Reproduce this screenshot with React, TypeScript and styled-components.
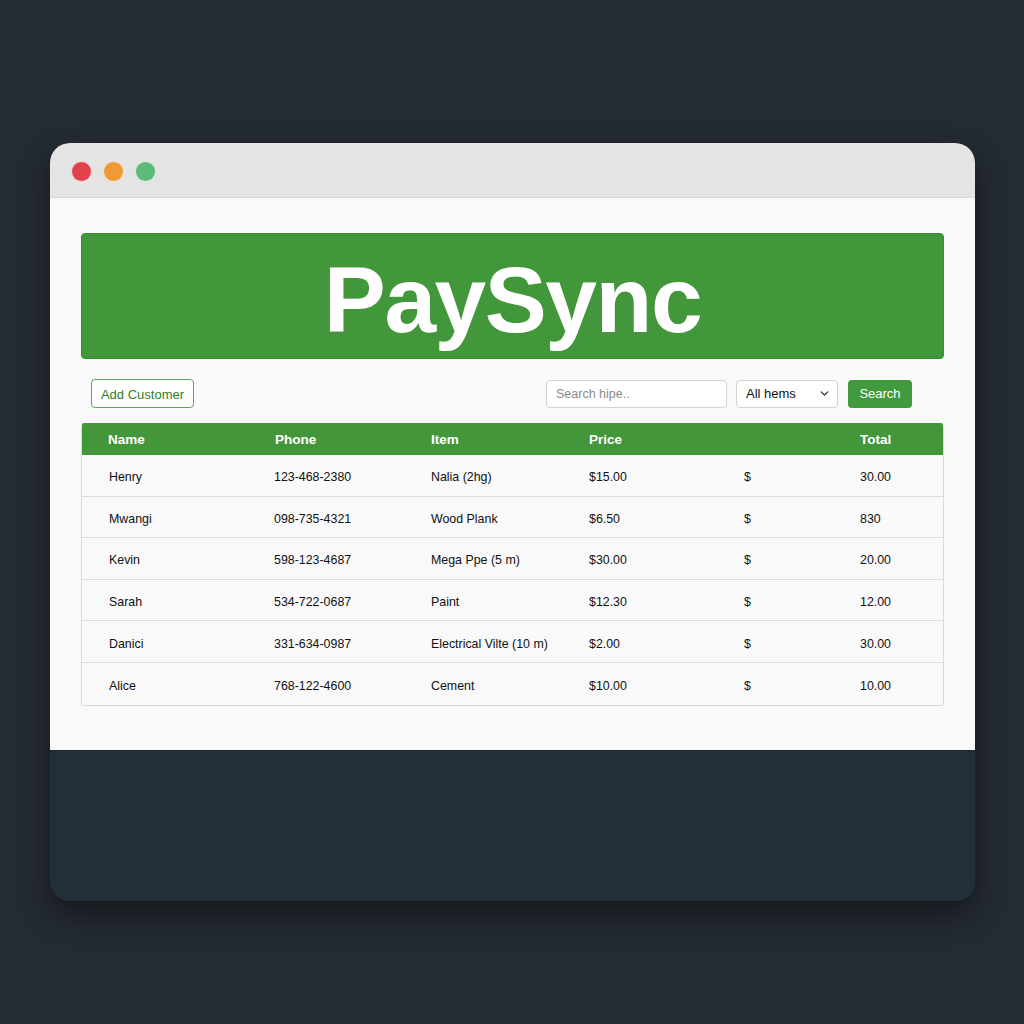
import React from "react";
import styled, { createGlobalStyle } from "styled-components";
import { ChevronDown } from "lucide-react";

const GlobalStyle = createGlobalStyle`
  html, body { margin: 0; padding: 0; }
  body {
    background: #252b33;
    font-family: "Liberation Sans", Arial, sans-serif;
    width: 1024px;
    height: 1024px;
    overflow: hidden;
  }
`;

const Page = styled.div`
  padding: 143px 0 0 50px;
`;

const Window = styled.div`
  width: 925px;
  border-radius: 20px;
  overflow: hidden;
  background: #232f38;
  box-shadow: 0 14px 30px rgba(0, 0, 0, 0.45);
  display: flex;
  flex-direction: column;
`;

const TitleBar = styled.div`
  height: 55px;
  background: #e4e4e4;
  display: flex;
  align-items: center;
  gap: 13px;
  padding: 2px 0 0 22px;
  border-bottom: 1px solid #d9d9d9;
  box-sizing: border-box;
`;

const Dot = styled.span<{ $color: string; $ring: string }>`
  width: 19px;
  height: 19px;
  border-radius: 50%;
  background: ${(p) => p.$color};
  box-shadow: 0 0 0 1px ${(p) => p.$ring};
`;

const Content = styled.div`
  background: #f9f9f9;
  padding: 35px 31px 44px 31px;
  display: flex;
  flex-direction: column;
  border-bottom: 1px solid #1b242b;
`;

const Footer = styled.div`
  height: 150px;
  background: #232f38;
`;

const Banner = styled.div`
  height: 126px;
  background: #43973b;
  border: 1px solid #3b8b34;
  border-radius: 4px;
  box-sizing: border-box;
  display: flex;
  align-items: center;
  justify-content: center;
`;

const Title = styled.h1`
  margin: 0;
  color: #ffffff;
  font-family: "Liberation Sans", Arial, sans-serif;
  font-weight: 700;
  font-size: 93px;
  letter-spacing: -1.5px;
  line-height: 1;
  transform: translate(0px, 4px);
`;

const Toolbar = styled.div`
  display: flex;
  align-items: center;
  margin: 20px 0 15px 0;
  padding: 0 32px 0 10px;
  height: 29px;
`;

const OutlineButton = styled.button`
  height: 29px;
  width: 103px;
  border: 1px solid #5aa653;
  border-radius: 4px;
  background: #ffffff;
  color: #2f7f2a;
  font-family: "Liberation Sans", Arial, sans-serif;
  font-size: 13px;
  padding: 1px 0 0 0;
  cursor: pointer;
`;

const Spacer = styled.div`
  flex: 1;
`;

const SearchInput = styled.input`
  width: 181px;
  height: 28px;
  box-sizing: border-box;
  border: 1px solid #d3d3d3;
  border-radius: 4px;
  background: #ffffff;
  padding: 0 9px;
  font-family: "Liberation Sans", Arial, sans-serif;
  font-size: 12.5px;
  color: #333;
  &::placeholder {
    color: #8a8a8a;
  }
`;

const SelectBox = styled.div`
  margin-left: 9px;
  width: 102px;
  height: 28px;
  box-sizing: border-box;
  border: 1px solid #d3d3d3;
  border-radius: 4px;
  background: #ffffff;
  display: flex;
  align-items: center;
  justify-content: space-between;
  padding: 0 6px 0 9px;
  font-size: 13px;
  color: #111;
`;

const SolidButton = styled.button`
  margin-left: 10px;
  width: 64px;
  height: 28px;
  border: none;
  border-radius: 4px;
  background: #43993d;
  color: #ffffff;
  font-family: "Liberation Sans", Arial, sans-serif;
  font-size: 13px;
  padding: 0;
  cursor: pointer;
`;

const Table = styled.div`
  border: 1px solid #dadada;
  border-top: none;
  border-radius: 3px;
  overflow: hidden;
  background: #f9f9f9;
`;

const Row = styled.div<{ $head?: boolean }>`
  display: grid;
  grid-template-columns: 166px 157px 158px 155px 116px 1fr;
  padding: ${(p) => (p.$head ? "1px 0 0 26px" : "4px 0 0 26px")};
  align-items: center;
  height: ${(p) => (p.$head ? "32px" : "41.6px")};
  background: ${(p) => (p.$head ? "#43963a" : "#f9f9f9")};
  color: ${(p) => (p.$head ? "#ffffff" : "#111111")};
  font-weight: ${(p) => (p.$head ? 700 : 400)};
  font-size: ${(p) => (p.$head ? "13.5px" : "12.4px")};
  border-bottom: ${(p) => (p.$head ? "none" : "1px solid #dcdcdc")};
  box-sizing: border-box;
  &:last-child {
    border-bottom: none;
  }
`;

const Cell = styled.span<{ $shift?: number }>`
  white-space: nowrap;
  padding-left: ${(p) => p.$shift ?? 0}px;
`;

const rows = [
  ["Henry", "123-468-2380", "Nalia (2hg)", "$15.00", "$", "30.00"],
  ["Mwangi", "098-735-4321", "Wood Plank", "$6.50", "$", "830"],
  ["Kevin", "598-123-4687", "Mega Ppe (5 m)", "$30.00", "$", "20.00"],
  ["Sarah", "534-722-0687", "Paint", "$12.30", "$", "12.00"],
  ["Danici", "331-634-0987", "Electrical Vilte (10 m)", "$2.00", "$", "30.00"],
  ["Alice", "768-122-4600", "Cement", "$10.00", "$", "10.00"],
];

export default function App() {
  return (
    <>
      <GlobalStyle />
      <Page>
        <Window>
          <TitleBar>
            <Dot $color="#e2434b" $ring="#f3d0d2" />
            <Dot $color="#ee9b37" $ring="#f5dcc0" />
            <Dot $color="#5cbb78" $ring="#cfeed8" />
          </TitleBar>
          <Content>
            <Banner>
              <Title>PaySync</Title>
            </Banner>
            <Toolbar>
              <OutlineButton>Add Customer</OutlineButton>
              <Spacer />
              <SearchInput placeholder="Search hipe.." />
              <SelectBox>
                <span>All hems</span>
                <ChevronDown size={13} strokeWidth={2.5} color="#333" />
              </SelectBox>
              <SolidButton>Search</SolidButton>
            </Toolbar>
            <Table>
              <Row $head>
                <Cell>Name</Cell>
                <Cell $shift={1}>Phone</Cell>
                <Cell>Item</Cell>
                <Cell>Price</Cell>
                <Cell />
                <Cell>Total</Cell>
              </Row>
              {rows.map((r) => (
                <Row key={r[0]}>
                  <Cell $shift={1}>{r[0]}</Cell>
                  <Cell>{r[1]}</Cell>
                  <Cell>{r[2]}</Cell>
                  <Cell>{r[3]}</Cell>
                  <Cell>{r[4]}</Cell>
                  <Cell>{r[5]}</Cell>
                </Row>
              ))}
            </Table>
          </Content>
          <Footer />
        </Window>
      </Page>
    </>
  );
}
